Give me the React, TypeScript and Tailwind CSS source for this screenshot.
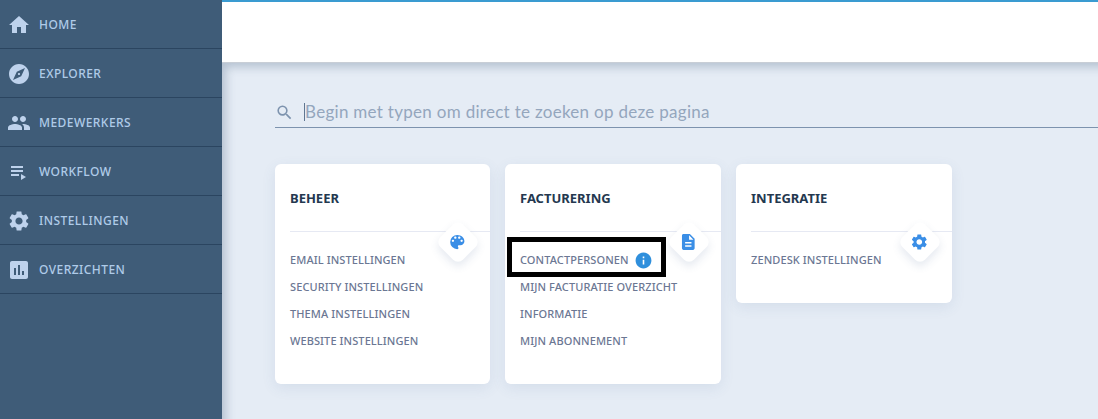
import type { ReactNode } from 'react';

const icons = {
  home: 'M10 20v-6h4v6h5v-8h3L12 3 2 12h3v8z',
  explore:
    'M12 10.9c-.61 0-1.1.49-1.1 1.1s.49 1.1 1.1 1.1c.61 0 1.1-.49 1.1-1.1s-.49-1.1-1.1-1.1zM12 2C6.48 2 2 6.48 2 12s4.48 10 10 10 10-4.48 10-10S17.52 2 12 2zm2.19 12.19L6 18l3.81-8.19L18 6l-3.81 8.19z',
  people:
    'M16 11c1.66 0 2.99-1.34 2.99-3S17.66 5 16 5c-1.66 0-3 1.34-3 3s1.34 3 3 3zm-8 0c1.66 0 2.99-1.34 2.99-3S9.66 5 8 5C6.34 5 5 6.34 5 8s1.34 3 3 3zm0 2c-2.33 0-7 1.17-7 3.5V19h14v-2.5c0-2.33-4.67-3.5-7-3.5zm8 0c-.29 0-.62.02-.97.05 1.16.84 1.97 1.97 1.97 3.45V19h6v-2.5c0-2.33-4.67-3.5-7-3.5z',
  playlist: 'M4 10h12v2H4zm0-4h12v2H4zm0 8h8v2H4zm10 0v6l5-3z',
  settings:
    'M19.14 12.94c.04-.3.06-.61.06-.94 0-.32-.02-.64-.07-.94l2.03-1.58c.18-.14.23-.41.12-.61l-1.92-3.32c-.12-.22-.37-.29-.59-.22l-2.39.96c-.5-.38-1.03-.7-1.62-.94l-.36-2.54c-.04-.24-.24-.41-.48-.41h-3.84c-.24 0-.43.17-.47.41l-.36 2.54c-.59.24-1.13.57-1.62.94l-2.39-.96c-.22-.08-.47 0-.59.22L2.74 8.87c-.12.21-.08.47.12.61l2.03 1.58c-.05.3-.09.63-.09.94s.02.64.07.94l-2.03 1.58c-.18.14-.23.41-.12.61l1.92 3.32c.12.22.37.29.59.22l2.39-.96c.5.38 1.03.7 1.62.94l.36 2.54c.05.24.24.41.48.41h3.84c.24 0 .44-.17.47-.41l.36-2.54c.59-.24 1.13-.56 1.62-.94l2.39.96c.22.08.47 0 .59-.22l1.92-3.32c.12-.22.07-.47-.12-.61l-2.01-1.58zM12 15.6c-1.98 0-3.6-1.62-3.6-3.6s1.62-3.6 3.6-3.6 3.6 1.62 3.6 3.6-1.62 3.6-3.6 3.6z',
  assessment:
    'M19 3H5c-1.1 0-2 .9-2 2v14c0 1.1.9 2 2 2h14c1.1 0 2-.9 2-2V5c0-1.1-.9-2-2-2zM9 17H7v-7h2v7zm4 0h-2V7h2v10zm4 0h-2v-4h2v4z',
  palette:
    'M12 3a9 9 0 0 0 0 18c.83 0 1.5-.67 1.5-1.5 0-.39-.15-.74-.39-1.01-.23-.26-.38-.61-.38-.99 0-.83.67-1.5 1.5-1.5H16c2.76 0 5-2.24 5-5 0-4.42-4.03-8-9-8zm-5.5 9c-.83 0-1.5-.67-1.5-1.5S5.67 9 6.5 9 8 9.67 8 10.5 7.33 12 6.5 12zm3-4C8.67 8 8 7.33 8 6.5S8.67 5 9.5 5s1.5.67 1.5 1.5S10.33 8 9.5 8zm5 0c-.83 0-1.5-.67-1.5-1.5S13.67 5 14.5 5s1.5.67 1.5 1.5S15.33 8 14.5 8zm3 4c-.83 0-1.5-.67-1.5-1.5S16.67 9 17.5 9s1.5.67 1.5 1.5-.67 1.5-1.5 1.5z',
  description:
    'M14 2H6c-1.1 0-1.99.9-1.99 2L4 20c0 1.1.89 2 1.99 2H18c1.1 0 2-.9 2-2V8l-6-6zm2 16H8v-2h8v2zm0-4H8v-2h8v2zm-3-5V3.5L18.5 9H13z',
  search:
    'M15.5 14h-.79l-.28-.27A6.471 6.471 0 0 0 16 9.5 6.5 6.5 0 1 0 9.5 16c1.61 0 3.09-.59 4.23-1.57l.27.28v.79l5 4.99L20.49 19l-4.99-5zm-6 0C7.01 14 5 11.99 5 9.5S7.01 5 9.5 5 14 7.01 14 9.5 11.99 14 9.5 14z',
  info: 'M12 2C6.48 2 2 6.48 2 12s4.48 10 10 10 10-4.48 10-10S17.52 2 12 2zm1 15h-2v-6h2v6zm0-8h-2V7h2v2z',
};

const Icon = ({ d, className }: { d: string; className: string }) => (
  <svg viewBox="0 0 24 24" fill="currentColor" className={className}>
    <path d={d} />
  </svg>
);

const navItems = [
  { label: 'HOME', icon: icons.home },
  { label: 'EXPLORER', icon: icons.explore },
  { label: 'MEDEWERKERS', icon: icons.people },
  { label: 'WORKFLOW', icon: icons.playlist },
  { label: 'INSTELLINGEN', icon: icons.settings },
  { label: 'OVERZICHTEN', icon: icons.assessment },
];

const Card = ({
  title,
  icon,
  size,
  children,
}: {
  title: string;
  icon: string;
  size: string;
  children: ReactNode;
}) => (
  <div className={`${size} shrink-0 rounded-[6px] bg-white pt-[25px] pl-[15px] shadow-[0_4px_14px_rgba(70,100,150,0.1)]`}>
    <h3 className="h-[42px] text-[13px] leading-[18px] font-bold text-[#24384f]">{title}</h3>
    <div className="relative h-px bg-[#e6e9f3]">
      {/* Diamond badge over the divider */}
      <div className="absolute top-[-5px] right-[16px] flex h-[32px] w-[32px] rotate-45 items-center justify-center rounded-[7px] bg-white shadow-[3px_3px_9px_rgba(70,100,150,0.14)]">
        <Icon d={icon} className="h-[19px] w-[19px] -translate-x-[1px] -rotate-45 text-[#3a8ee6]" />
      </div>
    </div>
    <ul className="mt-[15px]">{children}</ul>
  </div>
);

const CardLink = ({ children }: { children: ReactNode }) => (
  <li className="flex h-[27px] items-center text-[11px] font-medium tracking-[0.1px] text-[#6b7793]">{children}</li>
);

export default function App() {
  return (
    <div className="flex h-[419px] w-[1098px] overflow-hidden bg-[#e5ecf5] font-['Noto_Sans',sans-serif]">
      {/* Sidebar */}
      <aside className="w-[222px] shrink-0 bg-[#3f5c78]">
        {navItems.map((item) => (
          <div key={item.label} className="flex h-[49px] items-center border-b border-[#2b4560] pt-[2px] pl-[7px]">
            <Icon d={item.icon} className="h-6 w-6 text-[#bed2ec]" />
            <span className="ml-[8px] text-[12px] font-medium tracking-[0.45px] text-[#afcbe8]">{item.label}</span>
          </div>
        ))}
      </aside>

      {/* Main Content Area */}
      <div className="flex flex-1 flex-col">
        <header className="h-[63px] shrink-0 border-t-2 border-b border-t-[#3a9bd1] border-b-[#c8ced6] bg-white" />
        <main className="flex-1 pt-[36px] pl-[53px] shadow-[inset_8px_8px_10px_-4px_rgba(70,95,125,0.3)]">
          <div className="flex h-[29px] items-center border-b border-[#7d93ae] pb-[2px]">
            <Icon d={icons.search} className="h-[19px] w-[19px] text-[#7d93ae]" />
            <span className="ml-[10px] h-[18px] w-px bg-[#5f7692]" />
            <span className="text-[17px] tracking-[0.29px] text-[#94a6bd] font-['Lato',sans-serif]">
              Begin met typen om direct te zoeken op deze pagina
            </span>
          </div>

          <div className="mt-[36px] flex gap-[15px]">
            <Card title="BEHEER" icon={icons.palette} size="h-[220px] w-[215px]">
              <CardLink>EMAIL INSTELLINGEN</CardLink>
              <CardLink>SECURITY INSTELLINGEN</CardLink>
              <CardLink>THEMA INSTELLINGEN</CardLink>
              <CardLink>WEBSITE INSTELLINGEN</CardLink>
            </Card>
            <Card title="FACTURERING" icon={icons.description} size="h-[220px] w-[216px]">
              <CardLink>
                <span className="relative flex items-center">
                  CONTACTPERSONEN
                  <Icon d={icons.info} className="ml-[5px] h-[19px] w-[19px] text-[#2f8fdc]" />
                  {/* Annotation frame drawn over the row */}
                  <span className="absolute top-[-14px] left-[-13px] h-[40px] w-[159px] border-[5px] border-black" />
                </span>
              </CardLink>
              <CardLink>MIJN FACTURATIE OVERZICHT</CardLink>
              <CardLink>INFORMATIE</CardLink>
              <CardLink>MIJN ABONNEMENT</CardLink>
            </Card>
            <Card title="INTEGRATIE" icon={icons.settings} size="h-[139px] w-[216px]">
              <CardLink>ZENDESK INSTELLINGEN</CardLink>
            </Card>
          </div>
        </main>
      </div>
    </div>
  );
}
